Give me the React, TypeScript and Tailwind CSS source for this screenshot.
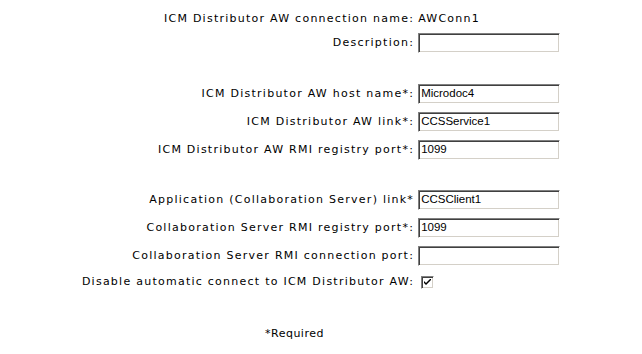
import React from 'react';

type Row =
  | { kind: 'text'; label: string; value: string }
  | { kind: 'input'; label: string; value: string }
  | { kind: 'check'; label: string }
  | { kind: 'gap'; h: string };

const rows: Row[] = [
  { kind: 'text', label: 'ICM Distributor AW connection name:', value: 'AWConn1' },
  { kind: 'input', label: 'Description:', value: '' },
  { kind: 'gap', h: 'h-[23px]' },
  { kind: 'input', label: 'ICM Distributor AW host name*:', value: 'Microdoc4' },
  { kind: 'input', label: 'ICM Distributor AW link*:', value: 'CCSService1' },
  { kind: 'input', label: 'ICM Distributor AW RMI registry port*:', value: '1099' },
  { kind: 'gap', h: 'h-[22px]' },
  { kind: 'input', label: 'Application (Collaboration Server) link*', value: 'CCSClient1' },
  { kind: 'input', label: 'Collaboration Server RMI registry port*:', value: '1099' },
  { kind: 'input', label: 'Collaboration Server RMI connection port:', value: '' },
  { kind: 'check', label: 'Disable automatic connect to ICM Distributor AW:' },
];

function Field({ value }: { value: string }) {
  return (
    <div className="w-[142px] h-[20px] border border-t-[#808080] border-l-[#808080] border-b-white border-r-white shadow-[inset_1px_1px_0_#404040,inset_-1px_-1px_0_#d4d0c8] bg-white flex items-center px-[2px] text-[11.5px] tracking-normal text-black [font-family:'Liberation_Sans',Arial,sans-serif]">
      {value}
    </div>
  );
}

function Check() {
  return (
    <div className="w-[13px] h-[13px] border border-t-[#808080] border-l-[#808080] border-b-white border-r-white shadow-[inset_1px_1px_0_#404040,inset_-1px_-1px_0_#d4d0c8] bg-white flex items-center justify-center">
      <svg width="7" height="7" viewBox="0 0 7 7">
        <path d="M0 2 L0 4 L2 6 L7 1 L7 -1 L2 4 Z" fill="#000" />
      </svg>
    </div>
  );
}

export default function App() {
  return (
    <div className="w-[642px] h-[354px] bg-white text-black text-[11px] [font-family:'DejaVu_Sans',Verdana,sans-serif] pt-[9px]">
      <div className="grid grid-cols-[auto_auto] justify-center tracking-[1.25px]">
        {rows.map((r, i) => {
          if (r.kind === 'gap') return <div key={i} className={`col-span-2 ${r.h}`} />;
          const h = r.kind === 'text' ? 'h-[20px]' : r.kind === 'check' ? 'h-[24px]' : 'h-[28px]';
          return (
            <React.Fragment key={i}>
              <div className={`${h} flex items-center justify-end pr-[4px] whitespace-nowrap`}>{r.label}</div>
              <div className={`${h} flex items-center`}>
                {r.kind === 'text' && <span>{r.value}</span>}
                {r.kind === 'input' && <Field value={r.value} />}
                {r.kind === 'check' && <div className="pl-[3px]"><Check /></div>}
              </div>
            </React.Fragment>
          );
        })}
      </div>
      <div className="mt-[32px] pl-[265px] tracking-[0.5px]">*Required</div>
    </div>
  );
}
